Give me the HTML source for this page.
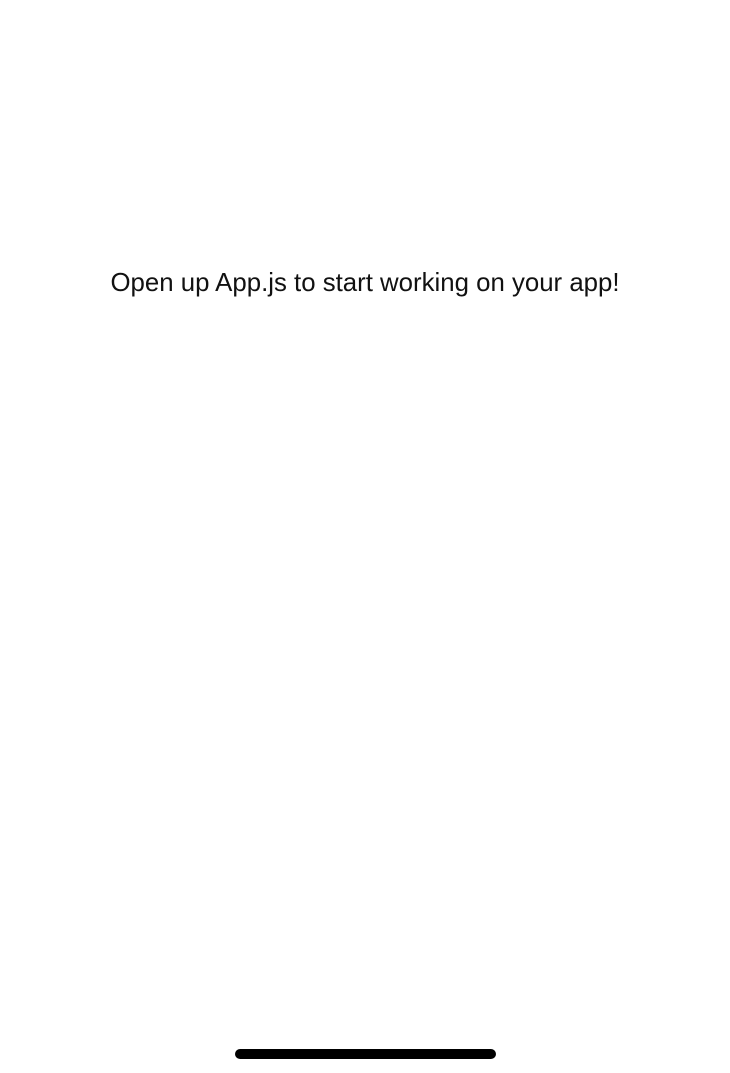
<!DOCTYPE html>
<html><head><meta charset="utf-8"><style>
html,body{margin:0;padding:0;background:#fff;width:730px;height:1073px;overflow:hidden;position:relative}
.t{position:absolute;left:0;width:730px;top:266px;text-align:center;font-family:"Liberation Sans",sans-serif;font-size:25.8px;color:#111;line-height:34px}
.bar{position:absolute;left:235px;top:1049px;width:261px;height:10px;border-radius:5px;background:#000}
</style></head><body>
<div class="t">Open up App.js to start working on your app!</div>
<div class="bar"></div>
</body></html>
